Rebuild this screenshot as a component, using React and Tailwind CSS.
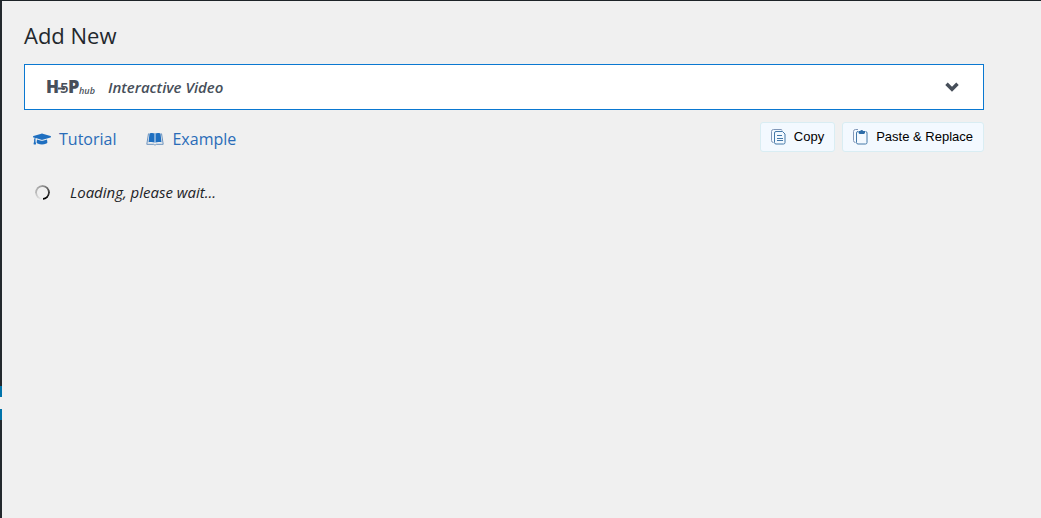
import { FaGraduationCap } from "react-icons/fa";

function HubLogo() {
  return (
    <svg width="48" height="32" viewBox="0 0 48 32" role="img" aria-label="H5P hub" className="shrink-0 overflow-visible fill-[#474f5a] font-['Open_Sans',sans-serif]">
      <text x="-1" y="22" fontSize="17" fontWeight="800">H</text>
      <text x="13" y="22" fontSize="15" fontWeight="600">5</text>
      <text x="21" y="22" fontSize="18" fontWeight="800">P</text>
      <path d="M11 16.500h5v2h-5z" />
      <circle cx="16.500" cy="17.500" r="1.600" />
      <text x="32" y="23" fontSize="9" fontWeight="600" fontStyle="italic">hub</text>
    </svg>
  );
}

function BookIcon() {
  return (
    <svg width="18" height="14" viewBox="0 0 18 14" aria-hidden="true" className="shrink-0">
      <path d="M3.500 1.500C5.500 .9 7.500 .9 9 1.800c1.500-.9 3.500-.9 5.500-.3l1 8.800c-2.500-.5-4.500-.4-6.500.5-2-.9-4-1-6.500-.5z" fill="#1f6fc0" />
      <path d="M2.500 1.500.8 12.300h7c.5.800 1.900.8 2.400 0h7l-1.700-10.800" fill="none" stroke="#6a91bd" strokeWidth="1" />
      <path d="M9 2v9" stroke="#dfe9f3" strokeWidth="1" />
    </svg>
  );
}

function CopyIcon() {
  return (
    <svg width="15" height="16" viewBox="0 0 15 16" fill="none" stroke="#4478a8" aria-hidden="true" className="shrink-0">
      <path d="M11 1.500a1 1 0 0 0-1-1H2.500a2 2 0 0 0-2 2v9a2 2 0 0 0 2 2" stroke="#8197b8" />
      <path d="M5 2.500h6.500l2.500 2.500V13.500a1.500 1.500 0 0 1-1.500 1.500H5a1.500 1.500 0 0 1-1.500-1.500V4A1.500 1.500 0 0 1 5 2.500z" />
      <path d="M6 6.500h5M6 9.500h6M6 11.500h6" />
    </svg>
  );
}

function PasteIcon() {
  return (
    <svg width="15" height="16" viewBox="0 0 15 16" fill="none" stroke="#4478a8" aria-hidden="true" className="shrink-0">
      <path d="M5 .5H2.500a2 2 0 0 0-2 2v9a2 2 0 0 0 2 2" stroke="#8197b8" />
      <path d="M5 2.500A1.500 1.500 0 0 0 3.500 4v9.500A1.500 1.500 0 0 0 5 15h7.500a1.500 1.500 0 0 0 1.500-1.500V4a1.500 1.500 0 0 0-1.500-1.500" />
      <path d="M5.500 2h1.700a1.600 1.600 0 0 1 3 0H12v2l-1 1H6.500l-1-1z" fill="#2d6ca8" stroke="none" />
    </svg>
  );
}

function Spinner() {
  return (
    <span
      aria-hidden="true"
      className="size-[15px] shrink-0 rounded-full bg-[conic-gradient(from_180deg,#f0f0f0,#bbb_25%,#999_50%,#444_72%,#000_92%,#000)] mask-[radial-gradient(circle,transparent_5px,#000_6px)]"
    />
  );
}

function ActionButton({ icon: Icon, children }) {
  return (
    <button type="button" className="flex h-[30px] items-center gap-2 rounded-[3px] border border-[#d9edf3] bg-[#f3f9ff] px-[10px] font-['Liberation_Sans',Arial,sans-serif] text-[13px] text-black">
      <Icon />
      {children}
    </button>
  );
}

export default function App() {
  return (
    <div className="flex min-h-screen border-t border-[#1d2327] bg-[#f0f0f0] font-['Open_Sans',sans-serif]">
      {/* Edge of the collapsed admin menu, with the current item's arrow */}
      <div className="flex w-[2px] shrink-0 flex-col bg-[#23282d]" aria-hidden="true">
        <div className="mt-[385px] flex h-[34px] flex-col justify-center bg-[#0073aa]">
          <div className="h-3 bg-[#f0f0f0]" />
        </div>
      </div>

      <main className="flex-1 pt-5 pr-[57px] pl-[22px]">
        <h1 className="text-[22px] leading-7 text-[#23282d]">Add New</h1>

        <button type="button" aria-expanded="false" className="mt-[15px] flex h-[46px] w-full items-center border border-[#0a78d1] bg-white pr-6 pl-[22px] text-[#474f5a]">
          <HubLogo />
          <span className="ml-[13px] text-[15px] font-semibold italic">Interactive Video</span>
          <svg width="14" height="10" viewBox="0 0 14 10" fill="none" stroke="currentColor" strokeWidth="3.500" aria-hidden="true" className="ml-auto">
            <path d="M1.500 1.800 7 7.200l5.500-5.400" />
          </svg>
        </button>

        <div className="mt-3 flex items-start justify-between">
          <nav className="flex h-[34px] items-center gap-[30px] pl-[9px] text-base text-[#2a6cb8]">
            <a href="#tutorial" className="flex items-center gap-2">
              <FaGraduationCap size={18} color="#1f6fc0" aria-hidden="true" />
              Tutorial
            </a>
            <a href="#example" className="flex items-center gap-2">
              <BookIcon />
              Example
            </a>
          </nav>
          <div className="flex gap-[7px]">
            <ActionButton icon={CopyIcon}>Copy</ActionButton>
            <ActionButton icon={PasteIcon}>Paste &amp; Replace</ActionButton>
          </div>
        </div>

        <div role="status" className="mt-[25px] flex items-center gap-5 pl-[11px] text-[15px] text-[#1d2327] italic">
          <Spinner />
          Loading, please wait...
        </div>
      </main>
    </div>
  );
}
